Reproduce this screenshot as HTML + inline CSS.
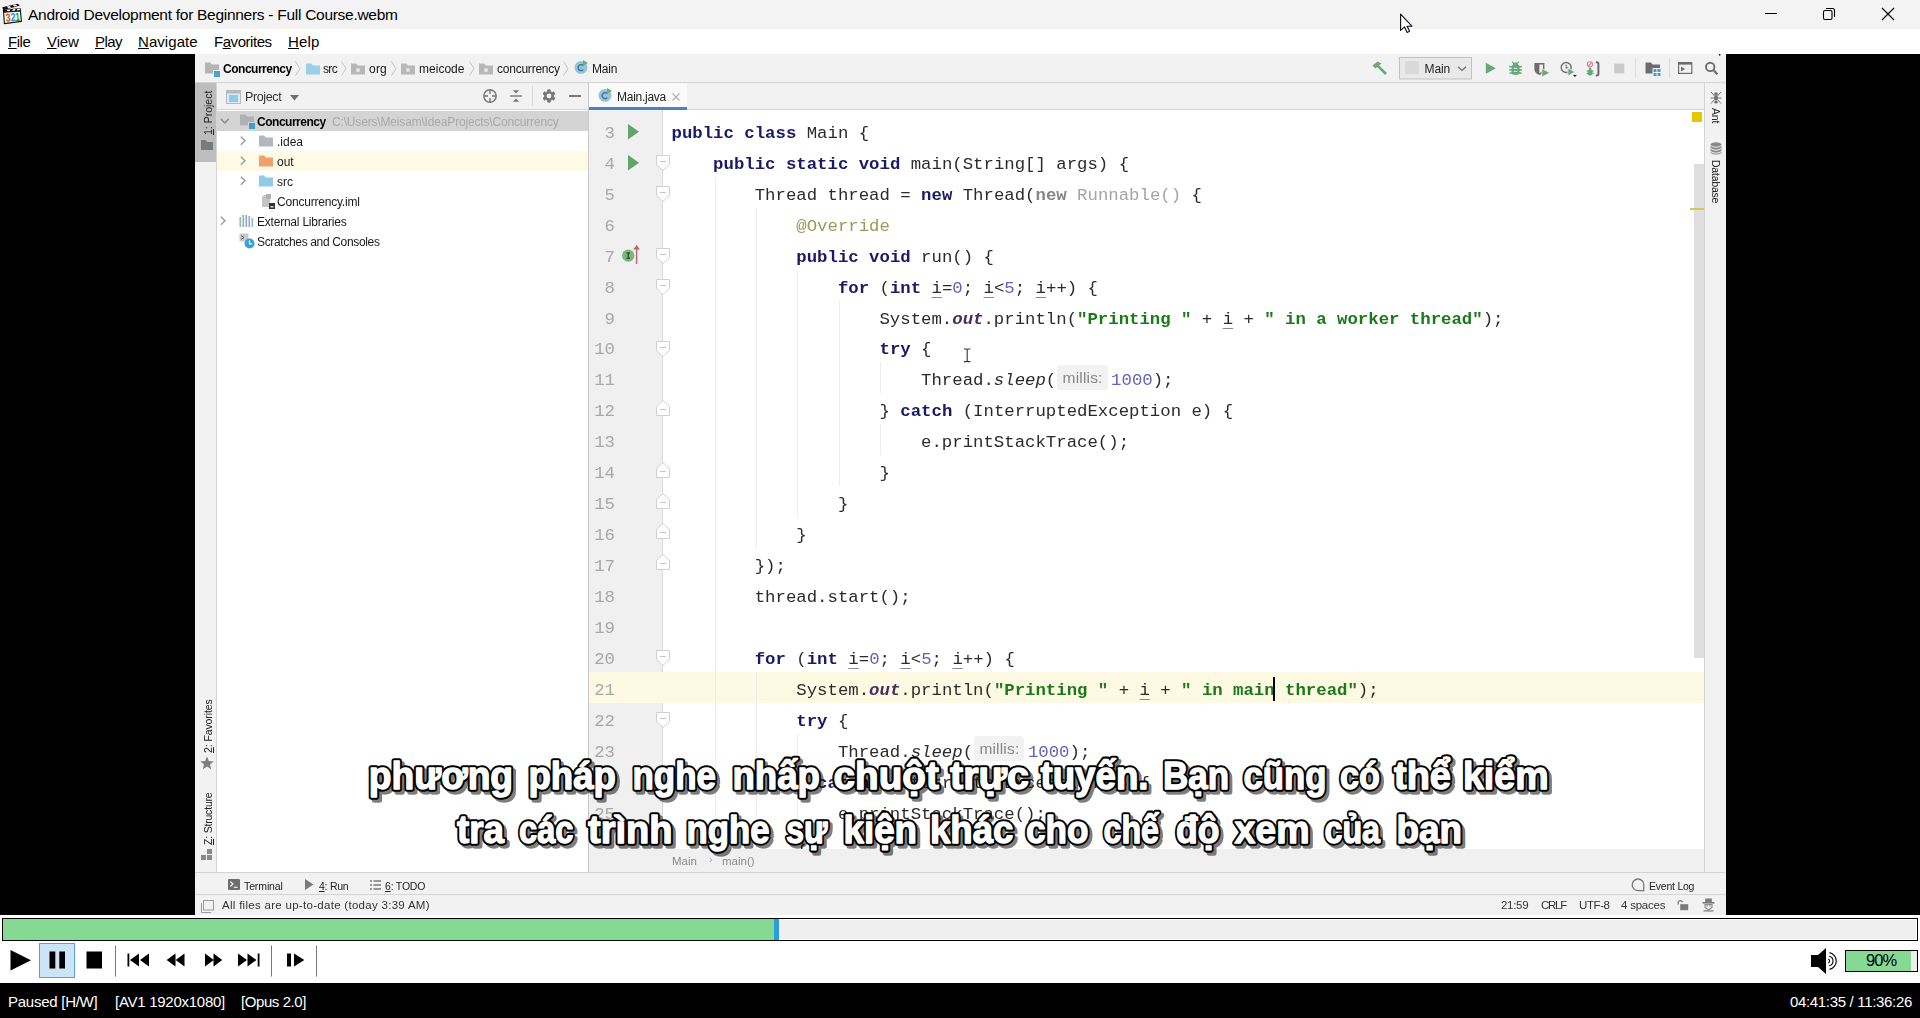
<!DOCTYPE html>
<html><head><meta charset="utf-8">
<style>
*{box-sizing:border-box;margin:0;padding:0}
html,body{width:1920px;height:1018px;overflow:hidden;background:#000;font-family:"Liberation Sans",sans-serif;}
.abs{position:absolute}
#title{position:absolute;left:0;top:0;width:1920px;height:29px;background:#f3f3f3}
#title .t{position:absolute;left:28px;top:6px;font-size:15.5px;color:#000;white-space:nowrap}
#menu{position:absolute;left:0;top:29px;width:1920px;height:25px;background:#fff}
#menu span{position:absolute;top:4px;font-size:15px;color:#000;white-space:nowrap}
#menu u{text-decoration:underline;text-underline-offset:1px}
#video{position:absolute;left:0;top:54px;width:1920px;height:861px;background:#000}
#ide{position:absolute;left:195px;top:0;width:1531px;height:861px;background:#f2f2f2;overflow:hidden}
#seek{position:absolute;left:0;top:915px;width:1920px;height:28px;background:#fff}
#seekbar{position:absolute;left:2px;top:3px;width:1916px;height:23px;border:1px solid #000;background:#efefef;box-shadow:inset 0 0 0 1px #fff}
#seekfill{position:absolute;left:0;top:0;width:771px;height:21px;background:#86d993}
#seekthumb{position:absolute;left:771px;top:0;width:5px;height:21px;background:#289fdc}
#ctrl{position:absolute;left:0;top:943px;width:1920px;height:40px;background:#fff}
#status{position:absolute;left:0;top:983px;width:1920px;height:35px;background:#000;color:#fff;font-size:15px}
#status span{position:absolute;top:10px;white-space:nowrap}
/*X*/</style>
<style>
#ide{font-size:12px;color:#1a1a1a;filter:blur(0.4px)}
#ide .x{position:absolute;white-space:nowrap}
#nav{position:absolute;left:0;top:0;width:1531px;height:29px;background:#f2f2f2;border-bottom:1px solid #d4d4d4}
#nav .x{top:8px;font-size:12px}
.chev{position:absolute;top:7px;width:6px;height:15px}
#lstripe{position:absolute;left:0;top:29px;width:22px;height:789px;background:#f2f2f2;border-right:1px solid #d4d4d4}
#rstripe{position:absolute;left:1509px;top:29px;width:22px;height:789px;background:#f2f2f2;border-left:1px solid #d4d4d4}
.vt{position:absolute;white-space:nowrap;font-size:10.5px;color:#222;transform-origin:0 0}
#proj{position:absolute;left:22px;top:29px;width:371px;height:789px;background:#fff}
#projhead{position:absolute;left:0;top:0;width:371px;height:27px;background:#f2f2f2;border-bottom:1px solid #d4d4d4}
.row{position:absolute;left:0;width:371px;height:20px}
.row .x{top:3.5px;font-size:12px}
#edwrap{position:absolute;left:393px;top:29px;width:1116px;height:789px;background:#fff;border-left:1px solid #c9c9c9}
#tabs{position:absolute;left:0;top:0;width:1116px;height:27px;background:#f2f2f2;border-bottom:1px solid #d4d4d4}
#gutter{position:absolute;left:0;top:27px;width:74px;height:740px;background:#f0f0f0;border-right:1px solid #dcdcdc}
#curline{position:absolute;left:0;top:588.5px;width:1115px;height:31.5px;background:#fdf9e3}
#code{position:absolute;left:82.5px;top:35.9px;font-family:"Liberation Mono",monospace;font-size:17.34px;line-height:30.94px;white-space:pre;color:#2b2b2b}
#code .k{color:#1a1a66;font-weight:bold}
#code .s{color:#1a7a1a;font-weight:bold}
#code .n{color:#6262b6}
#code .a{color:#9a9a5a}
#code .g{color:#a4a4a4}#code .g b{color:#868686}
#code .f{color:#4e2a5e;font-style:italic;font-weight:bold}
#code .i{font-style:italic}
#code .u{text-decoration:underline;text-decoration-color:#8a8a8a;text-underline-offset:4px;text-decoration-thickness:1px}
#code .h{font-family:"Liberation Sans",sans-serif;font-size:15.5px;color:#878787;background:#f2f2f2;border-radius:3px;padding:4.2px 5px 4.2px 5.5px;margin:0 3.5px 0 0.8px;letter-spacing:0.18px;font-style:normal;font-weight:normal;line-height:16px;position:relative;top:-2.5px}
#lnums{position:absolute;left:0;top:35.9px;width:26px;text-align:right;font-family:"Liberation Mono",monospace;font-size:17.34px;line-height:30.94px;color:#a8a8a8;white-space:pre}
.guide{position:absolute;width:1px;background:#ececec}
#bc{position:absolute;left:393px;top:795px;width:1116px;height:23px;background:#f0f0f0;border-left:1px solid #c9c9c9}
#tw{position:absolute;left:0;top:818px;width:1531px;height:22px;background:#f2f2f2;border-top:1px solid #d4d4d4}
#sb{position:absolute;left:0;top:840px;width:1531px;height:21px;background:#f2f2f2;border-top:1px solid #d4d4d4}
#tw .x{font-size:10.5px;color:#222}#sb .x{color:#333}
.sub{position:absolute;left:0;width:1920px;text-align:center;font-family:"Liberation Sans",sans-serif;font-weight:bold;font-size:38px;line-height:52px;color:#fff;white-space:nowrap;-webkit-text-stroke:4.5px #000;paint-order:stroke fill;text-shadow:3px 3px 1px rgba(0,0,0,0.55)}
.sub span{display:inline-block}
#vr1{letter-spacing:-0.15px}#vr2{letter-spacing:-0.22px}#vt2{letter-spacing:-0.1px}#vt3{letter-spacing:-0.2px}
</style>

<style>
#title .t{letter-spacing:-0.28px}
#st1{letter-spacing:-0.26px}
#st2{letter-spacing:-0.27px}
#st3{letter-spacing:-0.42px}
#st4{letter-spacing:-0.32px}
#vol{letter-spacing:-0.98px}
#nv1{letter-spacing:-0.48px}
#nv2{letter-spacing:-0.63px}
#nv3{letter-spacing:0.22px}
#nv4{letter-spacing:0.02px}
#nv5{letter-spacing:-0.23px}
#nv6{letter-spacing:-0.18px}
#ph1{letter-spacing:-0.37px}
#tr1{letter-spacing:-0.48px}
#tr1b{letter-spacing:-0.17px}
#tr5{letter-spacing:-0.21px}
#tr6{letter-spacing:-0.22px}
#tr7{letter-spacing:-0.34px}
#tb1{letter-spacing:-0.26px}
#m1{letter-spacing:-0.47px}
#m2{letter-spacing:-0.11px}
#m3{letter-spacing:-0.6px}
#m4{letter-spacing:0.06px}
#m5{letter-spacing:-0.46px}
#m6{letter-spacing:0.16px}
#sub1{letter-spacing:0.02px}
#sub2{letter-spacing:-0.14px}
#tw1{letter-spacing:-0.11px}
#tw2{letter-spacing:-0.26px}
#tw3{letter-spacing:-0.21px}
#tw4{letter-spacing:-0.23px}
#sb1{letter-spacing:0.29px}
#sb2{letter-spacing:-0.3px}
#sb3{letter-spacing:-1.26px}
#sb4{letter-spacing:-0.4px}
#sb5{letter-spacing:-0.22px}
#nvm{letter-spacing:-0.08px}
</style></head><body>
<div id="title">
<svg class="abs" style="left:0;top:0" width="28" height="29" viewBox="0 0 28 29">
<path d="M2.3 7.2 L17.5 3.8 L20 5.6 L3.2 10.2 Z" fill="#111"/>
<path d="M6.8 6.6 L9.8 5.9 L11.4 7.4 L8.2 8.2 Z M12.8 5.1 L15.6 4.5 L17.4 5.8 L14.4 6.6 Z" fill="#f4f4f4"/>
<path d="M2.8 9.8 L20.6 8 L20.8 11 L3.2 12.3 Z" fill="#111"/>
<path d="M7.5 9.7 L10.5 9.4 L9.5 11.4 L6.6 11.6 Z M12.8 9.2 L15.6 8.9 L14.8 11 L12 11.2 Z M17.2 8.8 L19.8 8.6 L19.8 10.6 L16.8 10.8 Z" fill="#f4f4f4"/>
<path d="M3.6 12.2 L20.4 10.9 L21.4 21.4 L4.4 23.6 Z" fill="#fdfdfd" stroke="#111" stroke-width="1.1" stroke-linejoin="round"/>
<g font-family="Liberation Sans" font-weight="bold" font-size="11.5" transform="rotate(-5 12 17)">
<text x="5.6" y="21.2" fill="#e0500c" textLength="5" lengthAdjust="spacingAndGlyphs">3</text>
<text x="10.6" y="21.2" fill="#2e86de" textLength="5" lengthAdjust="spacingAndGlyphs">2</text>
<text x="15.4" y="21.2" fill="#159a15" textLength="4.4" lengthAdjust="spacingAndGlyphs">1</text>
</g>
</svg>

<div class="t">Android Development for Beginners - Full Course.webm</div>
<svg class="abs" style="left:1760px;top:0" width="160" height="29" viewBox="1760 0 160 29">
<rect x="1765" y="13" width="12" height="1" fill="#000"/>
<rect x="1823.5" y="10.5" width="8.5" height="9" rx="1.5" fill="none" stroke="#000" stroke-width="1.1"/>
<path d="M1826 8.5 H1832.5 A2 2 0 0 1 1834.5 10.5 V17" fill="none" stroke="#000" stroke-width="1.1"/>
<path d="M1882 8 L1894 20 M1894 8 L1882 20" stroke="#000" stroke-width="1.1"/>
</svg>

</div>
<div id="menu">
<span id="m1" style="left:8px"><u>F</u>ile</span>
<span id="m2" style="left:47px"><u>V</u>iew</span>
<span id="m3" style="left:95px"><u>P</u>lay</span>
<span id="m4" style="left:138px"><u>N</u>avigate</span>
<span id="m5" style="left:214px">F<u>a</u>vorites</span>
<span id="m6" style="left:288px"><u>H</u>elp</span>
</div>
<div id="video">
<div id="ide">
<svg width="0" height="0" style="position:absolute"><defs>
<path id="fold" d="M0 0.5 H5.2 L6.8 2.6 H14 V11.5 H0 Z"/>
<g id="cicon"><circle cx="7" cy="7.5" r="6.5" fill="#8fc6de"/><path d="M9.3 5.6 A3 3 0 1 0 9.3 9.6" fill="none" stroke="#4a6f80" stroke-width="1.3"/><path d="M9 0 L14 3 L9 6 Z" fill="#6fae6a"/></g>
<path id="chevr" d="M0.5 0.5 L5 7.5 L0.5 14.5" fill="none" stroke="#c4c4c4" stroke-width="1"/>
<path id="arr" d="M0.8 0.8 L5 4.8 L0.8 8.8" fill="none" stroke="#9a9a9a" stroke-width="1.4"/>
<path id="arrd" d="M0.8 0.8 L4.8 5 L8.8 0.8" fill="none" stroke="#8a8a8a" stroke-width="1.4"/>
<g id="foldm"><path d="M0.5 0.5 H13.5 V9.5 L7 15.5 L0.5 9.5 Z" fill="#fff" stroke="#d0d0d0" stroke-width="1"/><path d="M4 6.5 H10" stroke="#c4c4c4" stroke-width="1"/></g>
<g id="foldu"><path d="M0.5 15.5 H13.5 V6.5 L7 0.5 L0.5 6.5 Z" fill="#fff" stroke="#d0d0d0" stroke-width="1"/><path d="M4 9.5 H10" stroke="#c4c4c4" stroke-width="1"/></g>
<path id="runtri" d="M0 0 L13 7.5 L0 15 Z" fill="#5fa564"/>
</defs></svg>
<div id="nav">
<svg class="abs" style="left:10px;top:8px" width="16" height="15"><use href="#fold" fill="#b4b4b4"/><rect x="8" y="8" width="7" height="7" fill="#f2f2f2"/><rect x="9" y="9" width="6" height="6" fill="#4aa3d0"/></svg>
<span class="x" id="nv1" style="left:28px;font-weight:bold;color:#000">Concurrency</span>
<svg class="chev" style="left:100px"><use href="#chevr"/></svg>
<svg class="abs" style="left:111px;top:8.5px" width="14" height="12"><use href="#fold" fill="#9ecfe8"/></svg>
<span class="x" id="nv2" style="left:128px">src</span>
<svg class="chev" style="left:146px"><use href="#chevr"/></svg>
<svg class="abs" style="left:156px;top:9px" width="14" height="12"><use href="#fold" fill="#b8b8b8"/><circle cx="7" cy="7" r="2" fill="#e6e6e6"/></svg>
<span class="x" id="nv3" style="left:174px">org</span>
<svg class="chev" style="left:196px"><use href="#chevr"/></svg>
<svg class="abs" style="left:206px;top:9px" width="14" height="12"><use href="#fold" fill="#b8b8b8"/><circle cx="7" cy="7" r="2" fill="#e6e6e6"/></svg>
<span class="x" id="nv4" style="left:224px">meicode</span>
<svg class="chev" style="left:274px"><use href="#chevr"/></svg>
<svg class="abs" style="left:284px;top:9px" width="14" height="12"><use href="#fold" fill="#b8b8b8"/><circle cx="7" cy="7" r="2" fill="#e6e6e6"/></svg>
<span class="x" id="nv5" style="left:302px">concurrency</span>
<svg class="chev" style="left:368px"><use href="#chevr"/></svg>
<svg class="abs" style="left:379px;top:6px" width="15" height="15"><use href="#cicon"/></svg>
<span class="x" id="nv6" style="left:397px">Main</span>
<svg class="abs" style="left:1170px;top:0" width="361" height="29" viewBox="1170 0 361 29">
<g transform="translate(1177,7)"><path d="M0.5 4.5 L5.5 0.5 L9.5 2.5 L7 4.2 L15 12 L13 14 L5.2 6 L3.2 7.5 Z" fill="#6fa878"/></g>
<rect x="1204.5" y="3.5" width="72" height="21.5" fill="#e9e9e9" stroke="#c2c2c2"/>
<rect x="1210" y="7" width="14" height="13" fill="#d9d9d9"/>
<path d="M1263 12.8 L1267 16.5 L1271 12.8" fill="none" stroke="#6e6e6e" stroke-width="1.2"/>
<path d="M1290.8 8.7 L1300.8 14.2 L1290.8 19.8 Z" fill="#66a877"/>
<g transform="translate(1314.2,7.6)" fill="#66a877"><rect x="0" y="4.3" width="12.8" height="1.5"/><rect x="0" y="7.5" width="12.8" height="1.5"/><rect x="0.4" y="10.7" width="12" height="1.5"/><rect x="2.4" y="3" width="8" height="10.2" rx="2.6"/><rect x="4" y="0.9" width="4.8" height="3.4" rx="1.6"/><path d="M2.8 0 L4.8 2 M10 0 L8 2" stroke="#66a877" stroke-width="1.1"/><rect x="4.6" y="6.2" width="3.6" height="1.1" fill="#d4ead8"/><rect x="4.6" y="9.3" width="3.6" height="1.1" fill="#d4ead8"/></g>
<g transform="translate(1339.4,8)"><path d="M0 1 H10 V7 Q10 11 5 13 Q0 11 0 7 Z" fill="#6e6e6e"/><path d="M5 2.5 H8.5 V7 Q8.5 9.5 5 11.2 Z" fill="#f2f2f2"/><path d="M7.5 6.5 L15.4 10.8 L7.5 15 Z" fill="#66a877" stroke="#f2f2f2" stroke-width="0.8"/></g>
<g transform="translate(1365.4,7.5)"><circle cx="5.8" cy="6" r="5" fill="none" stroke="#6e6e6e" stroke-width="1.4"/><path d="M5.8 3 V6.4 H8" fill="none" stroke="#6e6e6e" stroke-width="1.1"/><path d="M7.5 6.5 L14.4 10.6 L7.5 14.6 Z" fill="#66a877" stroke="#f2f2f2" stroke-width="0.8"/><path d="M12.6 13.4 H16.4 L14.5 15.6 Z" fill="#222"/></g>
<g transform="translate(1391.4,7)"><circle cx="3.6" cy="3.3" r="2.6" fill="none" stroke="#e27f8c" stroke-width="1.1"/><path d="M1.9 5 L5.3 1.6" stroke="#e27f8c" stroke-width="1.1"/><rect x="1.2" y="8.4" width="5" height="6" rx="1.8" fill="#66a877"/><path d="M0.2 10 H7.2 M0.2 12.6 H7.2" stroke="#66a877" stroke-width="1"/><rect x="2.4" y="6.8" width="2.6" height="2.2" rx="1" fill="#66a877"/><path d="M9.4 1.2 H10.4 Q12 1.2 12 2.8 V12.8 Q12 14.4 10.4 14.4 H9.4" fill="none" stroke="#6a6a6a" stroke-width="2"/></g>
<rect x="1419.3" y="9.6" width="10" height="9.8" fill="#c9c9c9"/>
<rect x="1440" y="4" width="1" height="20" fill="#dcdcdc"/>
<g transform="translate(1450.5,8.5)"><path d="M0 0 H5.4 L7 2 H14.5 V11 H0 Z" fill="#6e6e6e"/><rect x="7" y="5.5" width="8.5" height="8" fill="#f2f2f2"/><rect x="8" y="6.5" width="3" height="3" fill="#4e9ad8"/><rect x="12" y="6.5" width="3" height="3" fill="#4e9ad8"/><rect x="8" y="10.5" width="3" height="3" fill="#4e9ad8"/><rect x="12" y="10.5" width="3" height="3" fill="#4e9ad8"/></g>
<rect x="1474" y="4" width="1" height="20" fill="#dcdcdc"/>
<g transform="translate(1483,8)"><rect x="0.6" y="0.6" width="13.2" height="10.8" fill="none" stroke="#6e6e6e" stroke-width="1.2"/><rect x="0.6" y="0.6" width="13.2" height="2" fill="#6e6e6e"/><path d="M3 4.6 L7 7 L3 9.4 Z" fill="#6e6e6e"/></g>
<g transform="translate(1510,7.7)"><circle cx="5.2" cy="5.2" r="4.2" fill="none" stroke="#6e6e6e" stroke-width="1.9"/><path d="M8.4 8.4 L12.4 12.6" stroke="#6e6e6e" stroke-width="2.2"/></g>
<rect x="1524" y="0" width="1.4" height="1.6" fill="#111"/>
</svg>
<span class="x" id="nvm" style="left:1229.5px;top:8px;font-size:12px;color:#222">Main</span>

</div>
<div id="lstripe">
<div class="abs" style="left:0;top:0;width:21px;height:79px;background:#bdbdbd"></div>
<div class="vt" id="vt1" style="left:7px;top:52px;transform:rotate(-90deg)"><u>1</u>: Project</div>
<svg class="abs" style="left:6px;top:57px" width="12" height="10"><path d="M0 0 H4.5 L6 2 H12 V10 H0 Z" fill="#7a7a7a"/></svg>
<div class="vt" id="vt2" style="left:7px;top:670px;transform:rotate(-90deg)"><u>2</u>: Favorites</div>
<svg class="abs" style="left:5px;top:673px" width="14" height="14"><path d="M7 0.5 L8.9 5 L13.7 5.4 L10 8.5 L11.2 13.2 L7 10.6 L2.8 13.2 L4 8.5 L0.3 5.4 L5.1 5 Z" fill="#7f7f7f"/></svg>
<div class="vt" id="vt3" style="left:7px;top:762px;transform:rotate(-90deg)"><u>Z</u>: Structure</div>
<svg class="abs" style="left:6px;top:766px" width="12" height="12"><rect x="6" y="0" width="5" height="5" fill="#8a8a8a"/><rect x="0" y="6" width="5" height="5" fill="#8a8a8a"/><rect x="6" y="6" width="5" height="5" fill="#8a8a8a"/></svg>
</div>
<div id="proj">
<div id="projhead">
<svg class="abs" style="left:9px;top:7px" width="15" height="14"><rect x="0.5" y="0.5" width="14" height="13" fill="#dcecf5" stroke="#b9b9b9"/><rect x="0.5" y="0.5" width="14" height="3" fill="#b9b9b9"/><rect x="3" y="5" width="9" height="7" fill="#8ecbe8"/></svg>
<span class="x" id="ph1" style="left:28px;top:7px;font-size:12.5px;color:#333">Project</span>
<svg class="abs" style="left:73px;top:12px" width="9" height="6"><path d="M0 0 H9 L4.5 5.5 Z" fill="#6e6e6e"/></svg>
<svg class="abs" style="left:265px;top:5px" width="16" height="16"><circle cx="8" cy="8" r="6.2" fill="none" stroke="#767676" stroke-width="1.4"/><path d="M8 2 V6 M8 10 V14 M2 8 H6 M10 8 H14" stroke="#767676" stroke-width="1.4"/></svg>
<svg class="abs" style="left:292px;top:5px" width="14" height="16"><path d="M1 8 H13" stroke="#767676" stroke-width="1.4"/><path d="M3.8 2.2 H10.2 L7 5.4 Z M3.8 13.8 H10.2 L7 10.6 Z" fill="#767676"/></svg>
<div class="abs" style="left:315px;top:3px;width:1px;height:20px;background:#d9d9d9"></div>
<svg class="abs" style="left:323.5px;top:5.3px" width="16" height="16" viewBox="0 0 16 16"><path d="M6.64 3.61 L6.75 1.83 L9.25 1.83 L9.36 3.61 L11.13 4.63 L12.72 3.83 L13.97 6.00 L12.49 6.98 L12.49 9.02 L13.97 10.00 L12.72 12.17 L11.13 11.37 L9.36 12.39 L9.25 14.17 L6.75 14.17 L6.64 12.39 L4.87 11.37 L3.28 12.17 L2.03 10.00 L3.51 9.02 L3.51 6.98 L2.03 6.00 L3.28 3.83 L4.87 4.63 Z" fill="#767676" stroke="#767676" stroke-width="0.8" stroke-linejoin="round"/><circle cx="8" cy="8" r="2.4" fill="#f2f2f2"/></svg>
<div class="abs" style="left:351.5px;top:12.3px;width:12px;height:1.6px;background:#7a7a7a"></div>
</div>
<div class="row" style="top:28px;background:#d4d4d4">
<svg class="abs" style="left:3px;top:7px" width="10" height="7"><use href="#arrd"/></svg>
<svg class="abs" style="left:23px;top:3px" width="16" height="15"><use href="#fold" fill="#aeb2b8"/><rect x="8" y="8" width="7" height="7" fill="#d4d4d4"/><rect x="9" y="9" width="6" height="6" fill="#3d9fd0"/></svg>
<span class="x" id="tr1" style="left:40px;font-weight:bold;color:#000">Concurrency</span>
<span class="x" id="tr1b" style="left:115px;color:#a9a9a9">C:\Users\Meisam\IdeaProjects\Concurrency</span>
</div>
<div class="row" style="top:48px">
<svg class="abs" style="left:23px;top:5px" width="7" height="10"><use href="#arr"/></svg>
<svg class="abs" style="left:42px;top:4px" width="14" height="12"><use href="#fold" fill="#b3b8c0"/></svg>
<span class="x" id="tr2" style="left:60px">.idea</span>
</div>
<div class="row" style="top:68px;background:#fdfbe6">
<svg class="abs" style="left:23px;top:5px" width="7" height="10"><use href="#arr"/></svg>
<svg class="abs" style="left:42px;top:4px" width="14" height="12"><use href="#fold" fill="#f0a06a"/></svg>
<span class="x" id="tr3" style="left:60px">out</span>
</div>
<div class="row" style="top:88px">
<svg class="abs" style="left:23px;top:5px" width="7" height="10"><use href="#arr"/></svg>
<svg class="abs" style="left:42px;top:4px" width="14" height="12"><use href="#fold" fill="#92cbe8"/></svg>
<span class="x" id="tr4" style="left:60px">src</span>
</div>
<div class="row" style="top:108px">
<svg class="abs" style="left:44px;top:3px" width="14" height="15"><path d="M3 1 H9 V13 H1 V3 Z" fill="#c4c4c4"/><rect x="5" y="0" width="5" height="5" fill="#b0b0b0"/><rect x="8" y="9" width="6" height="6" fill="#333"/><rect x="9.5" y="12" width="3" height="1.5" fill="#ddd"/></svg>
<span class="x" id="tr5" style="left:60px">Concurrency.iml</span>
</div>
<div class="row" style="top:128px">
<svg class="abs" style="left:3px;top:5px" width="7" height="10"><use href="#arr"/></svg>
<svg class="abs" style="left:22px;top:4px" width="15" height="12"><rect x="0.5" y="2" width="1.6" height="10" fill="#8fbf8f"/><rect x="3.5" y="0" width="1.6" height="12" fill="#8fa8c8"/><rect x="6.5" y="0" width="1.6" height="12" fill="#8fa8c8"/><rect x="9.5" y="1" width="1.6" height="11" fill="#8fa8c8"/><rect x="12.5" y="3" width="1.6" height="9" fill="#a0b4cc"/></svg>
<span class="x" id="tr6" style="left:40px">External Libraries</span>
</div>
<div class="row" style="top:148px">
<svg class="abs" style="left:22px;top:2px" width="16" height="16"><rect x="0.5" y="0.5" width="9" height="8" fill="#c9c9c9"/><path d="M2 2.5 L5 4.5 L2 6.5" fill="none" stroke="#666" stroke-width="1"/><circle cx="10.5" cy="10.5" r="5" fill="#3aa0dc"/><path d="M10.5 7.5 V10.8 H13" fill="none" stroke="#fff" stroke-width="1.2"/></svg>
<span class="x" id="tr7" style="left:40px">Scratches and Consoles</span>
</div>
</div>
<div id="edwrap">
<div id="tabs">
<div class="abs" style="left:0;top:0;width:98px;height:27px;background:#fafafa"></div>
<div class="abs" style="left:0;top:23.5px;width:98px;height:3.5px;background:#4a83c4"></div>
<svg class="abs" style="left:9px;top:5px" width="15" height="15"><use href="#cicon"/></svg>
<span class="x" id="tb1" style="left:28px;top:7px;font-size:12px;color:#222">Main.java</span>
<svg class="abs" style="left:83px;top:10px" width="8" height="8"><path d="M0.5 0.5 L7.5 7.5 M7.5 0.5 L0.5 7.5" stroke="#b0b0b0" stroke-width="1.1"/></svg>
</div>
<div id="gutter"></div>
<div id="curline"></div>
<div class="guide" style="left:125.5px;top:93.8px;height:672.2px"></div>
<div class="guide" style="left:166.9px;top:124.7px;height:340.3px"></div>
<div class="guide" style="left:166.9px;top:588.8px;height:177.2px"></div>
<div class="guide" style="left:208.3px;top:186.6px;height:247.5px"></div>
<div class="guide" style="left:208.3px;top:650.7px;height:30.9px"></div>
<div class="guide" style="left:208.3px;top:712.6px;height:30.9px"></div>
<div class="guide" style="left:249.8px;top:217.5px;height:185.6px"></div>
<div class="guide" style="left:291.2px;top:279.4px;height:30.9px"></div>
<div class="guide" style="left:291.2px;top:341.3px;height:30.9px"></div>
<div id="lnums">3
4
5
6
7
8
9
10
11
12
13
14
15
16
17
18
19
20
21
22
23
24
25</div>
<div id="code"><span class="k">public class</span> Main {
    <span class="k">public static void</span> main(String[] args) {
        Thread thread = <span class="k">new</span> Thread(<span class="g"><b>new</b> Runnable()</span> {
            <span class="a">@Override</span>
            <span class="k">public void</span> run() {
                <span class="k">for</span> (<span class="k">int</span> <span class="u">i</span>=<span class="n">0</span>; <span class="u">i</span>&lt;<span class="n">5</span>; <span class="u">i</span>++) {
                    System.<span class="f">out</span>.println(<span class="s">"Printing "</span> + <span class="u">i</span> + <span class="s">" in a worker thread"</span>);
                    <span class="k">try</span> {
                        Thread.<span class="i">sleep</span>(<span class="h">millis:</span><span class="n">1000</span>);
                    } <span class="k">catch</span> (InterruptedException e) {
                        e.printStackTrace();
                    }
                }
            }
        });
        thread.start();

        <span class="k">for</span> (<span class="k">int</span> <span class="u">i</span>=<span class="n">0</span>; <span class="u">i</span>&lt;<span class="n">5</span>; <span class="u">i</span>++) {
            System.<span class="f">out</span>.println(<span class="s">"Printing "</span> + <span class="u">i</span> + <span class="s">" in main thread"</span>);
            <span class="k">try</span> {
                Thread.<span class="i">sleep</span>(<span class="h">millis:</span><span class="n">1000</span>);
            } <span class="k">catch</span> (InterruptedException e) {
                e.printStackTrace();
            }</div>
<svg class="abs" style="left:39px;top:40.5px" width="12" height="16"><path d="M0 0 L11 7.7 L0 15.4 Z" fill="#62a46c"/></svg>
<svg class="abs" style="left:39px;top:71.5px" width="12" height="16"><path d="M0 0 L11 7.7 L0 15.4 Z" fill="#62a46c"/></svg>
<svg class="abs" style="left:67px;top:72.3px" width="15" height="17"><use href="#foldm"/></svg>
<svg class="abs" style="left:67px;top:103.3px" width="15" height="17"><use href="#foldm"/></svg>
<svg class="abs" style="left:67px;top:165.1px" width="15" height="17"><use href="#foldm"/></svg>
<svg class="abs" style="left:67px;top:196.1px" width="15" height="17"><use href="#foldm"/></svg>
<svg class="abs" style="left:67px;top:258.0px" width="15" height="17"><use href="#foldm"/></svg>
<svg class="abs" style="left:67px;top:567.4px" width="15" height="17"><use href="#foldm"/></svg>
<svg class="abs" style="left:67px;top:629.2px" width="15" height="17"><use href="#foldm"/></svg>
<svg class="abs" style="left:67px;top:316.6px" width="15" height="17"><use href="#foldu"/></svg>
<svg class="abs" style="left:67px;top:378.5px" width="15" height="17"><use href="#foldu"/></svg>
<svg class="abs" style="left:67px;top:409.5px" width="15" height="17"><use href="#foldu"/></svg>
<svg class="abs" style="left:67px;top:440.4px" width="15" height="17"><use href="#foldu"/></svg>
<svg class="abs" style="left:67px;top:471.3px" width="15" height="17"><use href="#foldu"/></svg>
<svg class="abs" style="left:67px;top:687.9px" width="15" height="17"><use href="#foldu"/></svg>
<svg class="abs" style="left:32px;top:160.7px" width="22" height="22" viewBox="0 0 22 22"><circle cx="7.2" cy="11.6" r="6.2" fill="#7db67c"/><path d="M5.4 9 H9 M5.4 14.2 H9 M7.2 9 V14.2" stroke="#2f5a2f" stroke-width="1.5" fill="none"/><path d="M15.6 1.6 V20" stroke="#c8606a" stroke-width="1.4"/><path d="M12.2 5.6 L15.6 1.2 L19 5.6 Z" fill="#c8606a"/></svg>
<div class="abs" style="left:1105px;top:81px;width:10px;height:494px;background:#dedede"></div>
<div class="abs" style="left:1103px;top:28.5px;width:10px;height:10px;background:#e6c800"></div>
<div class="abs" style="left:1101px;top:124.5px;width:14px;height:2px;background:#d6c84e"></div>
<div class="abs" style="left:684px;top:594px;width:2px;height:24px;background:#000"></div>
<svg id="ibeam" class="abs" style="left:374px;top:265px" width="9" height="15" viewBox="0 0 9 15"><path d="M1 1 H3.4 Q4.2 1 4.2 2 V12.6 Q4.2 13.6 3.4 13.6 H1 M7.4 1 H5 Q4.2 1 4.2 2 M7.4 13.6 H5 Q4.2 13.6 4.2 12.6" fill="none" stroke="#333" stroke-width="1.1"/></svg>

</div>
<div id="rstripe">
<svg class="abs" style="left:5px;top:8px" width="12" height="13" viewBox="0 0 12 13"><ellipse cx="6" cy="3" rx="1.8" ry="1.8" fill="#6e6e6e"/><ellipse cx="6" cy="7" rx="2" ry="2.4" fill="#6e6e6e"/><ellipse cx="6" cy="11" rx="1.8" ry="1.6" fill="#6e6e6e"/><path d="M1 1 L4.5 5 M11 1 L7.5 5 M0.5 7 H4 M11.5 7 H8 M1 12.5 L4.5 8.5 M11 12.5 L7.5 8.5" stroke="#6e6e6e" stroke-width="1"/></svg>
<div class="vt" id="vr1" style="left:17px;top:25px;transform:rotate(90deg)">Ant</div>
<svg class="abs" style="left:5px;top:59px" width="12" height="13" viewBox="0 0 12 13"><ellipse cx="6" cy="2.5" rx="5.5" ry="2.2" fill="#8a8a8a"/><path d="M0.5 4 Q6 7.5 11.5 4 V6 Q6 9.5 0.5 6 Z M0.5 7 Q6 10.5 11.5 7 V9 Q6 12.5 0.5 9 Z M0.5 10 Q6 13.5 11.5 10 V11 Q6 14.5 0.5 11 Z" fill="#8a8a8a"/></svg>
<div class="vt" id="vr2" style="left:17px;top:77px;transform:rotate(90deg)">Database</div>

</div>
<div id="bc">
<span class="x" id="bc1" style="left:83px;top:6px;font-size:11.5px;color:#8a8a8a">Main</span>
<span class="x" style="left:120px;top:4px;font-size:11px;color:#aaa">›</span>
<span class="x" id="bc2" style="left:133px;top:6px;font-size:11.5px;color:#8a8a8a">main()</span>
</div>
<div id="tw">
<svg class="abs" style="left:33px;top:6px" width="12" height="11" viewBox="0 0 12 11"><rect width="12" height="11" rx="1" fill="#6e6e6e"/><path d="M2.2 2.5 L5 5 L2.2 7.5" fill="none" stroke="#f2f2f2" stroke-width="1.2"/><path d="M5.8 8.3 H9.6" stroke="#f2f2f2" stroke-width="1.2"/></svg>
<span class="x" id="tw1" style="left:49px;top:7px">Terminal</span>
<svg class="abs" style="left:110px;top:6px" width="9" height="11"><path d="M0 0 L8.5 5.5 L0 11 Z" fill="#7a7a7a"/></svg>
<span class="x" id="tw2" style="left:124px;top:7px"><u>4</u>: Run</span>
<svg class="abs" style="left:175px;top:7px" width="11" height="10"><path d="M0 1 H2 M0 5 H2 M0 9 H2 M3.5 1 H11 M3.5 5 H11 M3.5 9 H11" stroke="#7a7a7a" stroke-width="1.4"/></svg>
<span class="x" id="tw3" style="left:190px;top:7px"><u>6</u>: TODO</span>
<svg class="abs" style="left:1436px;top:5px" width="14" height="14" viewBox="0 0 14 14"><path d="M7 1 A5.8 5.8 0 1 0 7 12.6 H12.8 V7 A5.8 5.8 0 0 0 7 1 Z" fill="none" stroke="#7a7a7a" stroke-width="1.3"/></svg>
<span class="x" id="tw4" style="left:1454px;top:7px">Event Log</span>

</div>
<div id="sb">
<svg class="abs" style="left:6px;top:5px" width="13" height="13" viewBox="0 0 13 13"><rect x="2.5" y="0.5" width="10" height="9.5" fill="none" stroke="#9a9a9a"/><path d="M0.5 3 V12.5 H10" fill="none" stroke="#9a9a9a"/></svg>
<span class="x" id="sb1" style="left:27px;top:3.5px;font-size:11.5px">All files are up-to-date (today 3:39 AM)</span>
<span class="x" id="sb2" style="left:1306px;top:3.5px;font-size:11.5px">21:59</span>
<span class="x" id="sb3" style="left:1346px;top:3.5px;font-size:11.5px">CRLF</span>
<span class="x" id="sb4" style="left:1384px;top:3.5px;font-size:11.5px">UTF-8</span>
<span class="x" id="sb5" style="left:1426px;top:3.5px;font-size:11.5px">4 spaces</span>
<svg class="abs" style="left:1482px;top:4px" width="12" height="12" viewBox="0 0 12 12"><path d="M1.2 5.5 V3.2 A2.3 2.3 0 0 1 5.6 3.2" fill="none" stroke="#7a7a7a" stroke-width="1.3"/><rect x="3.2" y="5.2" width="8" height="6" fill="#7a7a7a"/></svg>
<svg class="abs" style="left:1507px;top:3px" width="13" height="14" viewBox="0 0 13 14"><rect x="3.2" y="0.5" width="6.6" height="4" fill="#7a7a7a"/><rect x="0.5" y="4" width="12" height="1.6" fill="#7a7a7a"/><path d="M3 6.5 H10 V9.5 L6.5 12 L3 9.5 Z" fill="none" stroke="#8a8a8a" stroke-width="1.1"/><rect x="1.5" y="12.2" width="10" height="1.4" fill="#8a8a8a"/><circle cx="5" cy="8" r="0.7" fill="#666"/><circle cx="8" cy="8" r="0.7" fill="#666"/></svg>

</div>

</div>
<svg class="abs" style="left:0;top:680px" width="1920" height="181" viewBox="0 680 1920 181">
<g font-family="Liberation Sans, sans-serif" font-weight="bold" font-size="38" stroke-linejoin="round" stroke-linecap="round">
<g fill="#000" stroke="#000" stroke-width="5.4" opacity="0.5" transform="translate(3,3)">
<text x="368.8" y="734.5" textLength="144.3" lengthAdjust="spacingAndGlyphs">phương</text>
<text x="528.5" y="734.5" textLength="87.5" lengthAdjust="spacingAndGlyphs">pháp</text>
<text x="632.5" y="734.5" textLength="83.5" lengthAdjust="spacingAndGlyphs">nghe</text>
<text x="732.5" y="734.5" textLength="87.5" lengthAdjust="spacingAndGlyphs">nhấp</text>
<text x="833.5" y="734.5" textLength="105.3" lengthAdjust="spacingAndGlyphs">chuột</text>
<text x="950.0" y="734.5" textLength="79.0" lengthAdjust="spacingAndGlyphs">trực</text>
<text x="1040.5" y="734.5" textLength="108.0" lengthAdjust="spacingAndGlyphs">tuyến.</text>
<text x="1163.0" y="734.5" textLength="66.0" lengthAdjust="spacingAndGlyphs">Bạn</text>
<text x="1243.5" y="734.5" textLength="83.0" lengthAdjust="spacingAndGlyphs">cũng</text>
<text x="1340.0" y="734.5" textLength="40.0" lengthAdjust="spacingAndGlyphs">có</text>
<text x="1394.0" y="734.5" textLength="57.0" lengthAdjust="spacingAndGlyphs">thể</text>
<text x="1463.0" y="734.5" textLength="85.5" lengthAdjust="spacingAndGlyphs">kiểm</text>
<text x="457.0" y="788.5" textLength="47.0" lengthAdjust="spacingAndGlyphs">tra</text>
<text x="519.0" y="788.5" textLength="54.5" lengthAdjust="spacingAndGlyphs">các</text>
<text x="588.0" y="788.5" textLength="84.5" lengthAdjust="spacingAndGlyphs">trình</text>
<text x="686.5" y="788.5" textLength="83.0" lengthAdjust="spacingAndGlyphs">nghe</text>
<text x="786.0" y="788.5" textLength="41.5" lengthAdjust="spacingAndGlyphs">sự</text>
<text x="843.5" y="788.5" textLength="73.5" lengthAdjust="spacingAndGlyphs">kiện</text>
<text x="930.0" y="788.5" textLength="83.5" lengthAdjust="spacingAndGlyphs">khác</text>
<text x="1026.0" y="788.5" textLength="62.5" lengthAdjust="spacingAndGlyphs">cho</text>
<text x="1103.5" y="788.5" textLength="55.5" lengthAdjust="spacingAndGlyphs">chế</text>
<text x="1176.0" y="788.5" textLength="43.5" lengthAdjust="spacingAndGlyphs">độ</text>
<text x="1234.5" y="788.5" textLength="75.0" lengthAdjust="spacingAndGlyphs">xem</text>
<text x="1324.5" y="788.5" textLength="55.5" lengthAdjust="spacingAndGlyphs">của</text>
<text x="1396.5" y="788.5" textLength="65.5" lengthAdjust="spacingAndGlyphs">bạn</text>
</g>
<g fill="#000" stroke="#000" stroke-width="5.4">
<text x="368.8" y="734.5" textLength="144.3" lengthAdjust="spacingAndGlyphs">phương</text>
<text x="528.5" y="734.5" textLength="87.5" lengthAdjust="spacingAndGlyphs">pháp</text>
<text x="632.5" y="734.5" textLength="83.5" lengthAdjust="spacingAndGlyphs">nghe</text>
<text x="732.5" y="734.5" textLength="87.5" lengthAdjust="spacingAndGlyphs">nhấp</text>
<text x="833.5" y="734.5" textLength="105.3" lengthAdjust="spacingAndGlyphs">chuột</text>
<text x="950.0" y="734.5" textLength="79.0" lengthAdjust="spacingAndGlyphs">trực</text>
<text x="1040.5" y="734.5" textLength="108.0" lengthAdjust="spacingAndGlyphs">tuyến.</text>
<text x="1163.0" y="734.5" textLength="66.0" lengthAdjust="spacingAndGlyphs">Bạn</text>
<text x="1243.5" y="734.5" textLength="83.0" lengthAdjust="spacingAndGlyphs">cũng</text>
<text x="1340.0" y="734.5" textLength="40.0" lengthAdjust="spacingAndGlyphs">có</text>
<text x="1394.0" y="734.5" textLength="57.0" lengthAdjust="spacingAndGlyphs">thể</text>
<text x="1463.0" y="734.5" textLength="85.5" lengthAdjust="spacingAndGlyphs">kiểm</text>
<text x="457.0" y="788.5" textLength="47.0" lengthAdjust="spacingAndGlyphs">tra</text>
<text x="519.0" y="788.5" textLength="54.5" lengthAdjust="spacingAndGlyphs">các</text>
<text x="588.0" y="788.5" textLength="84.5" lengthAdjust="spacingAndGlyphs">trình</text>
<text x="686.5" y="788.5" textLength="83.0" lengthAdjust="spacingAndGlyphs">nghe</text>
<text x="786.0" y="788.5" textLength="41.5" lengthAdjust="spacingAndGlyphs">sự</text>
<text x="843.5" y="788.5" textLength="73.5" lengthAdjust="spacingAndGlyphs">kiện</text>
<text x="930.0" y="788.5" textLength="83.5" lengthAdjust="spacingAndGlyphs">khác</text>
<text x="1026.0" y="788.5" textLength="62.5" lengthAdjust="spacingAndGlyphs">cho</text>
<text x="1103.5" y="788.5" textLength="55.5" lengthAdjust="spacingAndGlyphs">chế</text>
<text x="1176.0" y="788.5" textLength="43.5" lengthAdjust="spacingAndGlyphs">độ</text>
<text x="1234.5" y="788.5" textLength="75.0" lengthAdjust="spacingAndGlyphs">xem</text>
<text x="1324.5" y="788.5" textLength="55.5" lengthAdjust="spacingAndGlyphs">của</text>
<text x="1396.5" y="788.5" textLength="65.5" lengthAdjust="spacingAndGlyphs">bạn</text>
</g>
<g fill="#fff" stroke="#fff" stroke-width="1.3">
<text x="368.8" y="734.5" textLength="144.3" lengthAdjust="spacingAndGlyphs">phương</text>
<text x="528.5" y="734.5" textLength="87.5" lengthAdjust="spacingAndGlyphs">pháp</text>
<text x="632.5" y="734.5" textLength="83.5" lengthAdjust="spacingAndGlyphs">nghe</text>
<text x="732.5" y="734.5" textLength="87.5" lengthAdjust="spacingAndGlyphs">nhấp</text>
<text x="833.5" y="734.5" textLength="105.3" lengthAdjust="spacingAndGlyphs">chuột</text>
<text x="950.0" y="734.5" textLength="79.0" lengthAdjust="spacingAndGlyphs">trực</text>
<text x="1040.5" y="734.5" textLength="108.0" lengthAdjust="spacingAndGlyphs">tuyến.</text>
<text x="1163.0" y="734.5" textLength="66.0" lengthAdjust="spacingAndGlyphs">Bạn</text>
<text x="1243.5" y="734.5" textLength="83.0" lengthAdjust="spacingAndGlyphs">cũng</text>
<text x="1340.0" y="734.5" textLength="40.0" lengthAdjust="spacingAndGlyphs">có</text>
<text x="1394.0" y="734.5" textLength="57.0" lengthAdjust="spacingAndGlyphs">thể</text>
<text x="1463.0" y="734.5" textLength="85.5" lengthAdjust="spacingAndGlyphs">kiểm</text>
<text x="457.0" y="788.5" textLength="47.0" lengthAdjust="spacingAndGlyphs">tra</text>
<text x="519.0" y="788.5" textLength="54.5" lengthAdjust="spacingAndGlyphs">các</text>
<text x="588.0" y="788.5" textLength="84.5" lengthAdjust="spacingAndGlyphs">trình</text>
<text x="686.5" y="788.5" textLength="83.0" lengthAdjust="spacingAndGlyphs">nghe</text>
<text x="786.0" y="788.5" textLength="41.5" lengthAdjust="spacingAndGlyphs">sự</text>
<text x="843.5" y="788.5" textLength="73.5" lengthAdjust="spacingAndGlyphs">kiện</text>
<text x="930.0" y="788.5" textLength="83.5" lengthAdjust="spacingAndGlyphs">khác</text>
<text x="1026.0" y="788.5" textLength="62.5" lengthAdjust="spacingAndGlyphs">cho</text>
<text x="1103.5" y="788.5" textLength="55.5" lengthAdjust="spacingAndGlyphs">chế</text>
<text x="1176.0" y="788.5" textLength="43.5" lengthAdjust="spacingAndGlyphs">độ</text>
<text x="1234.5" y="788.5" textLength="75.0" lengthAdjust="spacingAndGlyphs">xem</text>
<text x="1324.5" y="788.5" textLength="55.5" lengthAdjust="spacingAndGlyphs">của</text>
<text x="1396.5" y="788.5" textLength="65.5" lengthAdjust="spacingAndGlyphs">bạn</text>
</g>
</g></svg>
</div>
<div id="seek"><div id="seekbar"><div id="seekfill"></div><div id="seekthumb"></div></div></div>
<div id="ctrl">
<div class="abs" style="left:39px;top:0;width:36px;height:35px;background:#cce4f7;border:1px solid #5a9fe0"></div>
<svg class="abs" style="left:0;top:0" width="330" height="40" viewBox="0 943 330 40">
<path d="M10.5 950 L31 960.2 L10.5 970.5 Z" fill="#000"/>
<rect x="49.5" y="951.5" width="5.8" height="17" fill="#000"/><rect x="59.3" y="951.5" width="5.7" height="17" fill="#000"/>
<rect x="86.5" y="951.5" width="15.5" height="17" fill="#000"/>
<rect x="115" y="945.5" width="1" height="31" fill="#7a7a7a"/>
<rect x="127.5" y="953.5" width="1.8" height="13" fill="#000"/>
<path d="M139 953.5 V966.5 L130 960 Z M149 953.5 V966.5 L140 960 Z" fill="#000"/>
<path d="M175.5 953.5 V966.5 L166.7 960 Z M184.5 953.5 V966.5 L175.7 960 Z" fill="#000"/>
<path d="M205 953.5 V966.5 L213.8 960 Z M213.5 953.5 V966.5 L222.3 960 Z" fill="#000"/>
<path d="M238 953.5 V966.5 L247 960 Z M247.5 953.5 V966.5 L256.5 960 Z" fill="#000"/>
<rect x="257.7" y="953.5" width="1.8" height="13" fill="#000"/>
<rect x="271" y="945.5" width="1" height="31" fill="#7a7a7a"/>
<rect x="287" y="953.5" width="4" height="13" fill="#000"/>
<path d="M294 953.5 V966.5 L304.3 960 Z" fill="#000"/>
<rect x="316" y="945.5" width="1" height="31" fill="#7a7a7a"/>
</svg>
<svg class="abs" style="left:1808px;top:3px" width="34" height="30" viewBox="1808 946 34 30">
<path d="M1811 955 H1818 L1826 948 V974 L1818 967 H1811 Z" fill="#000"/>
<path d="M1828.3 959 A2.2 2.2 0 0 1 1828.3 963" fill="none" stroke="#000" stroke-width="1.1"/>
<path d="M1829.2 956.3 A4.8 4.8 0 0 1 1829.2 965.7" fill="none" stroke="#000" stroke-width="1.1"/>
<path d="M1829.5 952.6 A8.6 8.6 0 0 1 1829.5 969.4" fill="none" stroke="#000" stroke-width="1.1"/>
</svg>
<div class="abs" style="left:1845px;top:7px;width:73px;height:22px;border:1px solid #000;background:#eee"></div>
<div class="abs" style="left:1846px;top:8px;width:65px;height:20px;background:#86d895"></div>
<div class="abs" id="vol" style="left:1866px;top:8px;font-size:16.5px;color:#000;white-space:nowrap">90%</div>

</div>
<div id="status">
<span style="left:8px" id="st1">Paused [H/W]</span>
<span style="left:115px" id="st2">[AV1 1920x1080]</span>
<span style="left:241px" id="st3">[Opus 2.0]</span>
<span style="right:8px" id="st4">04:41:35 / 11:36:26</span>
</div>
<svg class="abs" style="left:1396px;top:10px;z-index:50" width="20" height="26" viewBox="1396 10 20 26"><path d="M1400.6 14.2 V30.4 L1404.6 26.9 L1407.1 32.4 L1409.6 31.2 L1407.1 26.2 H1411.9 Z" fill="#fff" stroke="#0a0a14" stroke-width="1.1" stroke-linejoin="round"/></svg>

</body></html>
